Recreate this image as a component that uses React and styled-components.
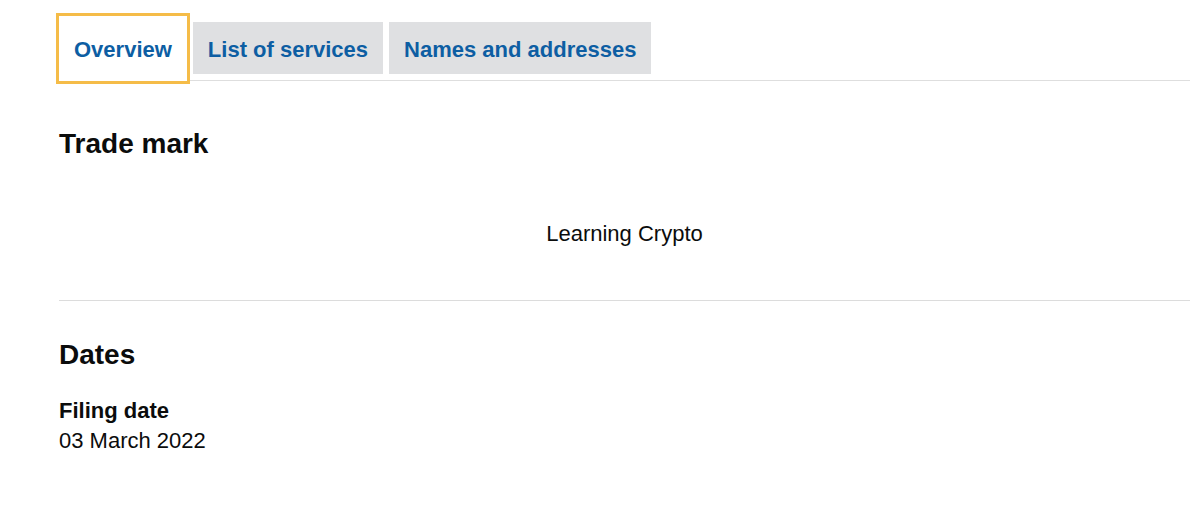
import React from "react";
import styled, { createGlobalStyle } from "styled-components";

const GlobalStyle = createGlobalStyle`
    html, body { margin:0; padding:0; background:#fff; }
    body {
        font-family:"Liberation Sans", Arial, sans-serif;
        color:#0b0c0c;
        -webkit-font-smoothing:antialiased;
    }
`;

const Page = styled.div`
    width:1131px;
    padding:16px 0 0 59px;
`;

const TabList = styled.div`
    display:flex;
    align-items:flex-start;
    gap:6px;
    height:64px;
    border-bottom:1px solid #dedede;
`;

const Tab = styled.div`
    box-sizing:border-box;
    display:flex;
    align-items:center;
    padding:3px 15px 0;
    font-size:22px;
    font-weight:700;
    color:#0d5ea3;
    white-space:nowrap;
    position:relative;
    height:${p => (p.$active ? "65px" : "52px")};
    margin-top:${p => (p.$active ? "0" : "6px")};
    background:${p => (p.$active ? "#fff" : "#dfe0e2")};
    outline:${p => (p.$active ? "3px solid #f5bc48" : "none")};
    z-index:${p => (p.$active ? 1 : 0)};
`;

const Heading = styled.h2`
    margin:${p => p.$top}px 0 0;
    font-size:28px;
    line-height:32px;
    font-weight:700;
`;

const MarkText = styled.p`
    margin:59px 0 0;
    font-size:22px;
    line-height:30px;
    text-align:center;
`;

const Rule = styled.hr`
    margin:51px 0 0;
    border:0;
    border-top:1px solid #dcdcdc;
    height:0;
`;

const Field = styled.dl`
    margin:25px 0 0;
    font-size:22px;
    line-height:30px;
`;

const FieldLabel = styled.dt`
    font-weight:700;
`;

const FieldValue = styled.dd`
    margin:0;
`;

const tabs = ["Overview", "List of services", "Names and addresses"];

const App = () => {
    return (
        <>
            <GlobalStyle />
            <Page>
                <TabList>
                    {tabs.map((t, i) => (
                        <Tab key={t} $active={i === 0}>{t}</Tab>
                    ))}
                </TabList>
                <Heading $top={47}>Trade mark</Heading>
                <MarkText>Learning Crypto</MarkText>
                <Rule />
                <Heading $top={38}>Dates</Heading>
                <Field>
                    <FieldLabel>Filing date</FieldLabel>
                    <FieldValue>03 March 2022</FieldValue>
                </Field>
            </Page>
        </>
    );
};

export default App;
